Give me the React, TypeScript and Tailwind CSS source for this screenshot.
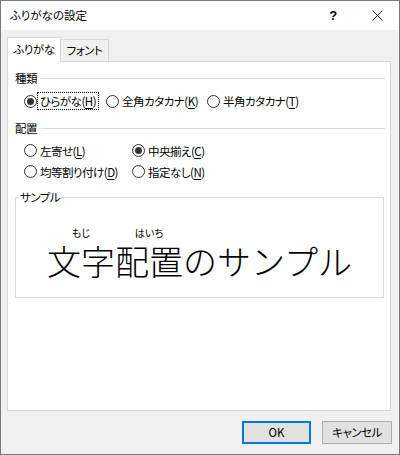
import React from "react";

interface RadioProps {
  checked?: boolean;
  pre: string;
  accel: string;
  focus?: boolean;
  width?: string;
}

function Radio({checked, pre, accel, focus, width}: RadioProps) {
  return (
    <div className={`flex items-center h-full ${width ?? ""}`}>
      <span className="w-[13px] h-[13px] rounded-full border border-[#333333] bg-white flex items-center justify-center shrink-0">
        {checked && <span className="w-[7px] h-[7px] rounded-full bg-[#333333]"/>}
      </span>
      <span
        className={`ml-[1px] px-[2px] leading-[16px] whitespace-nowrap ${focus ? "outline outline-1 outline-dotted outline-black" : ""}`}
      >
        {pre}(<span className="underline underline-offset-2">{accel}</span>)
      </span>
    </div>
  );
}

function GroupHeader({label}: {label: string}) {
  return (
    <div className="flex items-center h-4 ml-[7px] mr-[5px]">
      <span className="leading-4">{label}</span>
      <div className="flex-1 h-px bg-[#dcdcdc] ml-[4px]"/>
    </div>
  );
}

function Ruby({base, rt}: {base: string; rt: string}) {
  return (
    <span className="inline-flex flex-col items-center">
      <span className="text-[10px] leading-[10px] h-[10px] tracking-normal">{rt}</span>
      <span className="text-[34px] leading-[34px] mt-[6px] tracking-normal font-light [font-feature-settings:normal]">{base}</span>
    </span>
  );
}

export default function App() {
  return (
    <div
      className="w-[400px] h-[455px] border border-[#7a7a7a] flex flex-col text-[11.5px] tracking-[-0.5px] text-black font-['Noto_Sans_CJK_JP','Noto_Sans',sans-serif] [font-feature-settings:'palt']">
      {/* title bar */}
      <div className="h-[29px] bg-white flex items-center">
        <span className="pl-[9px] flex-1 tracking-normal">ふりがなの設定</span>
        <span className="w-[44px] h-full flex items-center justify-center font-bold text-[13px] font-['Liberation_Sans',sans-serif]">?</span>
        <span className="w-[44px] h-full flex items-center justify-center">
          <svg width="11" height="11" viewBox="0 0 11 11">
            <path d="M0.5 0.5 L10.5 10.5 M10.5 0.5 L0.5 10.5" stroke="#222" strokeWidth="1"/>
          </svg>
        </span>
      </div>

      <div className="flex-1 bg-[#f0f0f0] pl-[6px] pt-[7px] flex flex-col">
        {/* tabs */}
        <div className="flex items-end h-[24px] relative z-10">
          <div className="w-[54px] h-[25px] -mb-px bg-white border border-b-0 border-[#d9d9d9] flex items-center justify-center">
            ふりがな
          </div>
          <div className="w-[48px] h-[22px] border border-l-0 border-b-0 border-[#d9d9d9] flex items-center justify-center">
            フォント
          </div>
        </div>

        {/* panel */}
        <div className="w-[384px] h-[350px] bg-white border border-[#d9d9d9] flex flex-col">
          <div className="mt-[8px]">
            <GroupHeader label="種類"/>
          </div>
          <div className="mt-[5px] h-[20px] flex pl-[16px]">
            <Radio checked focus pre="ひらがな" accel="H" width="w-[82px]"/>
            <Radio pre="全角カタカナ" accel="K" width="w-[101px]"/>
            <Radio pre="半角カタカナ" accel="T"/>
          </div>

          <div className="mt-[9px]">
            <GroupHeader label="配置"/>
          </div>
          <div className="mt-[4px] grid grid-cols-[108px_1fr] auto-rows-[21px] pl-[16px]">
            <Radio pre="左寄せ" accel="L"/>
            <Radio checked pre="中央揃え" accel="C"/>
            <Radio pre="均等割り付け" accel="D"/>
            <Radio pre="指定なし" accel="N"/>
          </div>

          <fieldset className="mt-[7px] ml-[7px] w-[369px] h-[109px] border border-[#dcdcdc]">
            <legend className="ml-[3px] px-[1px] leading-4">サンプル</legend>
            <div className="pt-[23px] flex justify-center items-end">
              <Ruby base="文字" rt="もじ"/>
              <Ruby base="配置" rt="はいち"/>
              <span className="text-[34px] leading-[34px] tracking-normal font-light [font-feature-settings:normal]">のサンプル</span>
            </div>
          </fieldset>
        </div>

        {/* buttons */}
        <div className="mt-[10px] h-[23px] flex justify-end gap-[11px] pr-[7px] w-[392px]">
          <button className="w-[69px] h-[23px] bg-[#e1e1e1] border-2 border-[#0078d7] leading-none tracking-normal">OK</button>
          <button className="w-[70px] h-[23px] bg-[#e1e1e1] border border-[#adadad] leading-none">キャンセル</button>
        </div>
      </div>
    </div>
  );
}
